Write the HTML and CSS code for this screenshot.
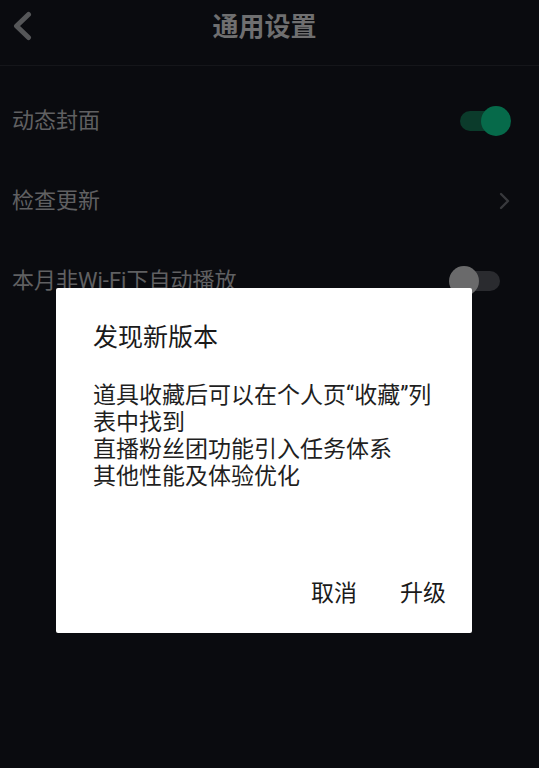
FILE: index.html
```html
<!DOCTYPE html>
<html lang="zh-CN">
<head>
<meta charset="utf-8">
<title>通用设置</title>
<link rel="stylesheet" href="styles.css">
</head>
<body>
<div class="screen">
  <header class="header">
    <div class="back">
      <svg width="22" height="32" viewBox="0 0 22 32"><polyline points="16.5,3.5 4.5,15 16.5,26.5" fill="none" stroke="#555658" stroke-width="5" stroke-linecap="round" stroke-linejoin="round"/></svg>
    </div>
    <h1 class="title">通用设置</h1>
    <div></div>
  </header>
  <ul class="list">
    <li class="row">
      <span class="label">动态封面</span>
      <span class="switch on"><span class="track"><span class="thumb"></span></span></span>
    </li>
    <li class="row">
      <span class="label">检查更新</span>
      <svg class="arrow" width="14" height="18" viewBox="0 0 14 18"><polyline points="3,2 10,9 3,16" fill="none" stroke="#38393c" stroke-width="2.4" stroke-linecap="round" stroke-linejoin="round"/></svg>
    </li>
    <li class="row">
      <span class="label">本月非Wi-Fi下自动播放</span>
      <span class="switch off"><span class="track"><span class="thumb"></span></span></span>
    </li>
  </ul>
  <div class="dialog">
    <h2 class="d-title">发现新版本</h2>
    <p class="d-body">道具收藏后可以在个人页“收藏”列表中找到<br>直播粉丝团功能引入任务体系<br>其他性能及体验优化</p>
    <div class="d-actions">
      <span class="btn">取消</span>
      <span class="btn">升级</span>
    </div>
  </div>
</div>
</body>
</html>
```
FILE: styles.css
```css
* { box-sizing: border-box; }
html, body {
  margin: 0;
  padding: 0;
  background: #0a0b0f;
  font-family: Roboto, "Noto Sans CJK SC", sans-serif;
}
.screen {
  width: 539px;
  height: 768px;
  position: relative;
  overflow: hidden;
  background: #0a0b0f;
}
.header {
  height: 66px;
  border-bottom: 1px solid #15161a;
  display: grid;
  grid-template-columns: 1fr auto 1fr;
  align-items: start;
}
.back {
  padding: 11px 0 0 12px;
}
.back svg { display: block; }
.title {
  margin: 0;
  padding: 11px 10px 0 0;
  font-size: 26px;
  line-height: 32px;
  font-weight: 700;
  color: #6f6f70;
}
.list {
  list-style: none;
  margin: 0;
  padding: 15px 0 0 0;
}
.row {
  height: 80px;
  display: flex;
  align-items: center;
  justify-content: space-between;
  padding: 0 28px 0 12px;
}
.label {
  font-size: 22px;
  line-height: 30px;
  color: #606062;
}
.arrow { display: block; margin-right: -1px; }
.switch {
  width: 62px;
  height: 30px;
  display: flex;
  align-items: center;
}
.track {
  width: 40px;
  height: 20px;
  margin: 0 11px;
  border-radius: 10px;
  display: flex;
  align-items: center;
}
.thumb {
  width: 30px;
  height: 30px;
  border-radius: 50%;
  flex: none;
}
.switch.on .track {
  background: #0b3b2b;
  justify-content: flex-end;
}
.switch.on .thumb {
  background: #066a4a;
  margin-right: -11px;
}
.switch.off .track {
  background: #2a2b2f;
  justify-content: flex-start;
}
.switch.off .thumb {
  background: #6a6a6b;
  margin-left: -11px;
}
.dialog {
  position: absolute;
  left: 56px;
  top: 288px;
  width: 416px;
  height: 345px;
  background: #ffffff;
  border-radius: 2px;
  padding: 35px 26px 26px 37px;
  display: flex;
  flex-direction: column;
}
.d-title {
  margin: 0;
  font-size: 25px;
  line-height: 30px;
  font-weight: 400;
  color: #1a1a1a;
}
.d-body {
  margin: 29px 0 0 0;
  font-size: 23px;
  line-height: 27px;
  color: #1f1f1f;
}
.d-actions {
  margin-top: auto;
  display: flex;
  justify-content: flex-end;
  gap: 43px;
}
.btn {
  font-size: 23px;
  line-height: 27px;
  color: #1a1a1a;
}
```
